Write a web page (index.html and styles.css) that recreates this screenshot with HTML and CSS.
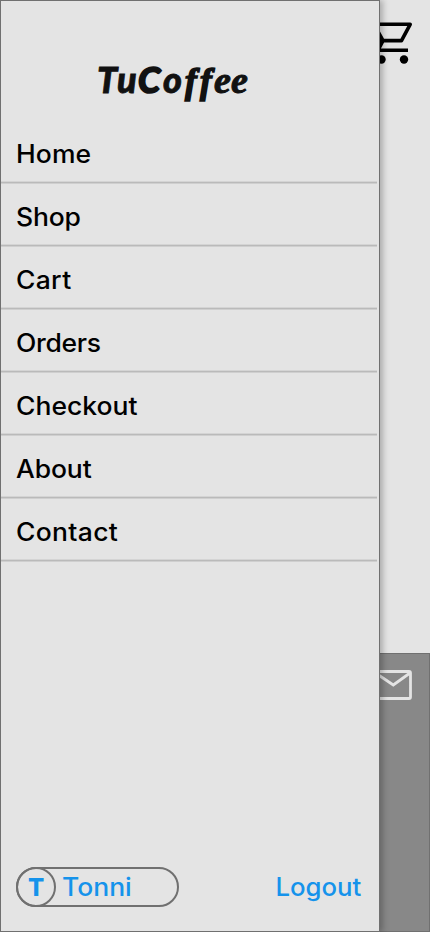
FILE: index.html
```html
<!DOCTYPE html>
<html lang="en">
<head>
<meta charset="utf-8">
<title>TuCoffee</title>
<link rel="stylesheet" href="styles.css">
</head>
<body>
<div class="page">
  <header class="topbar">
    <svg class="cart-icon" width="42" height="44" viewBox="0 0 42 44">
      <path d="M0 4.3H38.2L29.5 20.6H11L3 6M11 20.6L6 30.2H36" fill="none" stroke="#000" stroke-width="3.6" stroke-linejoin="round"/>
      <path d="M5 10L11.5 20L5 28Z"/>
      <circle cx="9.5" cy="39.5" r="4.2"/><circle cx="32" cy="39.5" r="4.2"/>
    </svg>
  </header>
  <footer class="footer">
    <svg class="mail-icon" width="38" height="30" viewBox="0 0 38 30">
      <path d="M2.5 1.5H35Q36.5 1.5 36.5 3V27Q36.5 28.5 35 28.5H2.5Q1 28.5 1 27V3Q1 1.5 2.5 1.5ZM1.5 3L19.3 15L36 3" fill="none" stroke="#e4e4e4" stroke-width="2.8"/>
    </svg>
  </footer>
</div>
<aside class="drawer">
  <svg class="logo" width="170" height="50" viewBox="90 55 170 50" role="img">
    <text y="93" x="97 117 138 163 185 200 214 231">Tu<tspan class="cap">C</tspan>o<tspan class="serif">ff</tspan><tspan class="e">ee</tspan></text>
  </svg>
  <nav class="menu">
    <a class="home"><span>Home</span></a>
    <a class="shop"><span>Shop</span></a>
    <a class="cart"><span>Cart</span></a>
    <a class="orders"><span>Orders</span></a>
    <a class="checkout"><span>Checkout</span></a>
    <a class="about"><span>About</span></a>
    <a class="contact"><span>Contact</span></a>
  </nav>
  <div class="account">
    <div class="user"><span class="avatar">T</span><span class="name">Tonni</span></div>
    <a class="logout">Logout</a>
  </div>
</aside>
</body>
</html>
```
FILE: styles.css
```css
* { box-sizing: border-box; }
body {
  margin: 0;
  width: 430px;
  height: 932px;
  overflow: hidden;
  background: #e4e4e4;
  color: #000;
  font-family: Inter, "Open Sans", sans-serif;
}
.page {
  display: flex;
  flex-direction: column;
  justify-content: space-between;
  height: 932px;
}
.topbar {
  display: flex;
  justify-content: flex-end;
  padding: 20px 18px 0 0;
}
.cart-icon { margin-right: -2px; }
.footer {
  display: flex;
  justify-content: flex-end;
  align-items: flex-start;
  height: 279px;
  padding: 16px 17px 0 0;
  border: 1px solid #707070;
  background: #888;
}
/* Slide-over menu covering the page */
.drawer {
  position: absolute;
  top: 0;
  left: 0;
  display: flex;
  flex-direction: column;
  width: 380px;
  height: 932px;
  border: 1px solid #707070;
  background: #e4e4e4;
  box-shadow: 3px 0 6px rgba(0, 0, 0, 0.25);
}
.logo { margin: 54px 0 0 89px; flex: none; }
.logo text {
  font: italic 900 36px Lato, sans-serif;
  fill: #111;
  stroke: #111;
  stroke-width: 0.8px;
}
.logo .cap { stroke-width: 1.6px; }
.logo .serif {
  font: italic bold 35px "Liberation Serif", serif;
  stroke-width: 1.6px;
}
.logo .e {
  font: italic bold 38px "Liberation Serif", serif;
  stroke-width: 1px;
}
.menu {
  display: flex;
  flex-direction: column;
  margin: 16px 2px 0 0;
}
.menu a {
  height: 63px;
  padding: 17px 0 0 15px;
  background: linear-gradient(#d4d4d4 0 1px, #bababa 1px 2px, #cfcfcf 2px 3px) bottom / 100% 3px no-repeat;
  font-size: 25px;
  font-weight: 450;
  line-height: 32px;
}
/* Slightly extended letterforms */
.menu span {
  display: inline-block;
  transform: translateY(0.4px) scaleX(1.06);
  transform-origin: left;
}
.menu .home { letter-spacing: 0.1px; }
.menu .shop { letter-spacing: -0.2px; }
.menu .cart { letter-spacing: 0.3px; }
.menu .orders { letter-spacing: -0.3px; }
.menu .about { letter-spacing: -0.1px; }
.menu .contact { letter-spacing: 0.3px; }
.account {
  display: flex;
  align-items: center;
  justify-content: space-between;
  margin: auto 18px 24px 15px;
}
.user {
  display: flex;
  align-items: center;
  width: 163px;
  height: 40px;
  border: 2px solid #707070;
  border-radius: 20px;
}
.avatar {
  display: flex;
  align-items: center;
  justify-content: center;
  width: 40px;
  height: 40px;
  margin-left: -2px;
  border: 2px solid #707070;
  border-radius: 50%;
  color: #1593eb;
  font-size: 24px;
  font-weight: 800;
}
.name, .logout {
  color: #1593eb;
  font-size: 25px;
  font-weight: 450;
}
.name {
  margin-left: 6px;
  transform: scaleX(1.06);
  transform-origin: left;
}
.logout {
  transform: scaleX(1.03);
  transform-origin: right;
}
```
